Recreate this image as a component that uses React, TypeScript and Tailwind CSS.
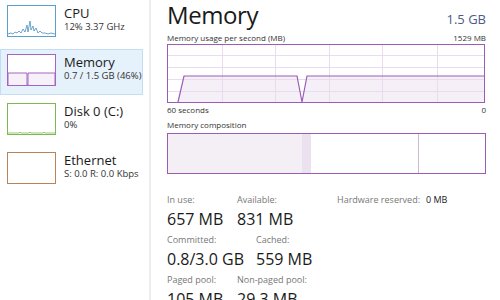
import React from "react";

const font = { fontFamily: '"Open Sans", "Noto Sans", sans-serif' };

function Thumb({ color, children }: { color: string; children?: React.ReactNode }) {
  return (
    <svg width="49" height="32" viewBox="0 0 49 32" className="shrink-0">
      <rect x="0.5" y="0.5" width="48" height="31" fill="white" stroke={color} />
      {children}
    </svg>
  );
}

function SideItem({
  title,
  sub,
  thumb,
  active,
}: {
  title: string;
  sub: string;
  thumb: React.ReactNode;
  active?: boolean;
}) {
  return (
    <div
      className={
        "flex h-[46px] items-start gap-[8px] pl-[6px] pt-[4px] mr-[6px] border " +
        (active ? "bg-[#e5f1fb] border-[#c4ddf5]" : "border-transparent")
      }
    >
      {thumb}
      <div className="leading-none pt-[1px]">
        <div className="text-[13px] text-[#1a1a1a] leading-[14px]">{title}</div>
        <div className="text-[9.5px] text-[#333] leading-[12px] mt-[1px]">{sub}</div>
      </div>
    </div>
  );
}

function Stat({ label, value, w }: { label: string; value: string; w: string }) {
  return (
    <div className={w}>
      <div className="text-[9px] text-[#777] leading-[12px]">{label}</div>
      <div className="text-[16px] text-[#1a1a1a] leading-[20px] mt-[3px]">{value}</div>
    </div>
  );
}

export default function App() {
  const purple = "#9b5cb8";
  return (
    <div className="flex w-[500px] h-[300px] bg-white overflow-hidden" style={font}>
      <div className="w-[151px] shrink-0 flex flex-col gap-[3px] border-r-2 border-[#ececec]">
        <SideItem
          title="CPU"
          sub="12% 3.37 GHz"
          thumb={
            <Thumb color="#5aa0cc">
              <polyline
                fill="none"
                stroke="#4a8fc0"
                strokeWidth="0.8"
                points="1,29 4,28 6,29 8,27 10,28 12,26 14,28 16,24 18,27 20,20 21,27 23,16 24,25 26,21 27,26 29,23 31,28 33,26 35,28 38,28 41,29 44,28 48,29"
              />
            </Thumb>
          }
        />
        <SideItem
          title="Memory"
          sub="0.7 / 1.5 GB (46%)"
          active
          thumb={
            <Thumb color="#a564c2">
              <polyline fill="#f6f1f8" stroke="#a564c2" strokeWidth="1" points="1,31 1,19 20,19 20,31 21,31 21,19 48,19 48,31" />
            </Thumb>
          }
        />
        <SideItem
          title="Disk 0 (C:)"
          sub="0%"
          thumb={
            <Thumb color="#7cba4f">
              <polyline fill="none" stroke="#7cba4f" strokeWidth="0.8" points="1,30 12,30 13,29 14,30 22,30 23,29 24,30 36,30 37,29 38,30 48,30" />
            </Thumb>
          }
        />
        <SideItem title="Ethernet" sub="S: 0.0 R: 0.0 Kbps" thumb={<Thumb color="#b88457" />} />
      </div>

      <div className="flex-1 pl-[16px] pr-[14px]">
        <div className="flex items-baseline justify-between h-[32px]">
          <div className="text-[24px] text-[#1a1a1a] leading-[30px] tracking-[-0.4px]">Memory</div>
          <div className="text-[13px] text-[#4b5b8a]">1.5 GB</div>
        </div>
        <div className="flex justify-between text-[8px] text-[#333] leading-[12px]">
          <span>Memory usage per second (MB)</span>
          <span>1529 MB</span>
        </div>
        <svg width="318" height="59" viewBox="0 0 318 59" className="block">
          <polygon points="11,58 17,32 130,32 135,58 140,32 318,32 318,58" fill="#f5f0f7" />
          {[55, 108, 162, 215, 270].map((x) => (
            <line key={x} x1={x + 0.5} y1="0" x2={x + 0.5} y2="59" stroke="#e8dced" />
          ))}
          {[11, 23, 35, 47].map((y) => (
            <line key={y} x1="0" y1={y + 0.5} x2="318" y2={y + 0.5} stroke="#e8dced" />
          ))}
          <polyline points="11,58 17,32 130,32 135,58 140,32 318,32" fill="none" stroke={purple} strokeWidth="1.2" />
          <rect x="0.5" y="0.5" width="317" height="58" fill="none" stroke={purple} />
        </svg>
        <div className="flex justify-between text-[8px] text-[#333] leading-[12px] mt-[1px]">
          <span>60 seconds</span>
          <span>0</span>
        </div>
        <div className="text-[8px] text-[#333] leading-[12px] mt-[3px]">Memory composition</div>
        <div className="mt-[2px] h-[41px] border border-[#9b5cb8] flex">
          <div className="w-[134px] bg-[#f3eff5]" />
          <div className="w-[9px] bg-[#ebe1ef]" />
          <div className="w-[108px] border-r border-[#cdb7d7]" />
          <div className="flex-1" />
        </div>

        <div className="mt-[20px] flex flex-col gap-[5px]">
          <div className="flex">
            <Stat label="In use:" value="657 MB" w="w-[70px]" />
            <Stat label="Available:" value="831 MB" w="w-[100px]" />
            <div className="flex text-[9px] leading-[12px]">
              <span className="text-[#777] w-[89px]">Hardware reserved:</span>
              <span className="text-[#1a1a1a]">0 MB</span>
            </div>
          </div>
          <div className="flex">
            <Stat label="Committed:" value="0.8/3.0 GB" w="w-[89px]" />
            <Stat label="Cached:" value="559 MB" w="w-[100px]" />
          </div>
          <div className="flex">
            <Stat label="Paged pool:" value="105 MB" w="w-[70px]" />
            <Stat label="Non-paged pool:" value="29.3 MB" w="w-[100px]" />
          </div>
        </div>
      </div>
    </div>
  );
}
